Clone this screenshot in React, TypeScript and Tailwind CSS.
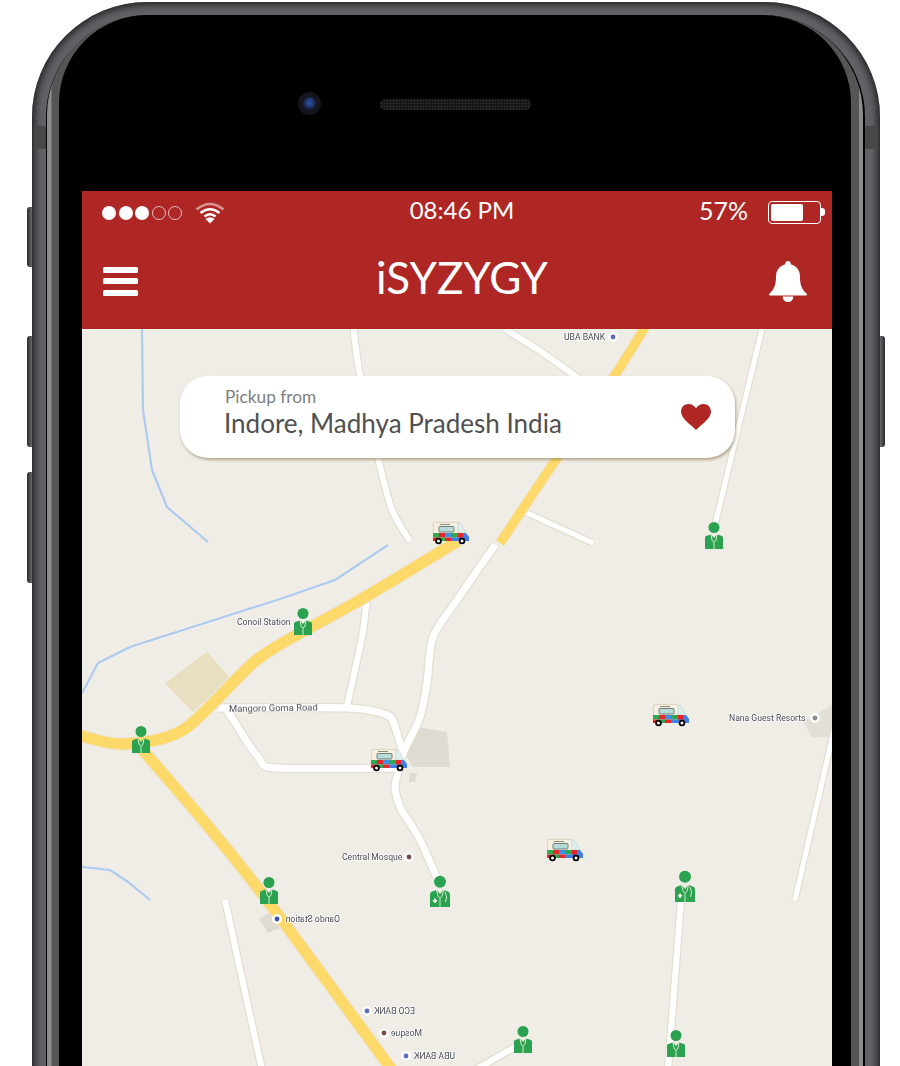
import React from "react";

const lato = "[font-family:Lato,sans-serif]";

function smooth(points: string): string {
  const p = points.split(" ").map((s) => s.split(",").map(Number));
  let d = `M${p[0][0]} ${p[0][1]}`;
  for (let i = 0; i < p.length - 1; i++) {
    const p0 = p[i - 1] ?? p[i];
    const p1 = p[i];
    const p2 = p[i + 1];
    const p3 = p[i + 2] ?? p2;
    const k = 0.14;
    const c1x = p1[0] + (p2[0] - p0[0]) * k;
    const c1y = p1[1] + (p2[1] - p0[1]) * k;
    const c2x = p2[0] - (p3[0] - p1[0]) * k;
    const c2y = p2[1] - (p3[1] - p1[1]) * k;
    d += `C${c1x.toFixed(1)} ${c1y.toFixed(1)} ${c2x.toFixed(1)} ${c2y.toFixed(1)} ${p2[0]} ${p2[1]}`;
  }
  return d;
}

const whiteRoads: { p: string; w?: number }[] = [
  { p: "353,325 360,376 378,458 392,510 410,541", w: 6 },
  { p: "505,329 543,353 578,378", w: 6 },
  { p: "495,545 457,600 433,637 427,683 420,717 403,753 398,773 395,787 400,807 408,820 420,840 438,880" },
  { p: "218,708 347,708 387,715 395,727 403,753" },
  { p: "227,710 258,757 277,768 400,768" },
  { p: "367,596 362,637 347,706", w: 6 },
  { p: "525,512 593,543", w: 5 },
  { p: "762,329 715,525", w: 5 },
  { p: "834,730 795,900", w: 5 },
  { p: "681,900 668,1070", w: 6 },
  { p: "225,900 262,1070", w: 6 },
  { p: "475,1070 520,1044", w: 6 },
];

const yellowRoads: { p: string; w: number }[] = [
  { p: "78,735 123,744 183,730 253,663 293,637 360,600 458,541", w: 11 },
  { p: "141,748 207,825 267,900 392,1070", w: 11 },
  { p: "645,327 615,375 557,458 500,543", w: 9 },
];

const streams = [
  "142,329 143,410 152,470 167,507 208,542",
  "82,693 98,663 130,647 277,600 335,580 388,545",
  "82,867 110,870 128,882 150,900",
];

const labels: { t: string; x: number; y: number; mirror?: boolean; rot?: number; size?: number }[] = [
  { t: "UBA BANK", x: 564, y: 340 },
  { t: "Conoil Station", x: 237, y: 625 },
  { t: "Mangoro Goma Road", x: 229, y: 712, rot: -1, size: 9.4 },
  { t: "Nana Guest Resorts", x: 729, y: 721 },
  { t: "Central Mosque", x: 342, y: 860 },
  { t: "Oando Station", x: 340, y: 922, mirror: true },
  { t: "ECO BANK", x: 415, y: 1014, mirror: true },
  { t: "Mosque", x: 422, y: 1036, mirror: true },
  { t: "UBA BANK", x: 455, y: 1059, mirror: true },
];

const poiDots: { x: number; y: number; c: string }[] = [
  { x: 613, y: 337, c: "#5c6bc0" },
  { x: 409, y: 857, c: "#7a4a4a" },
  { x: 277, y: 919, c: "#3f51b5" },
  { x: 367, y: 1011, c: "#5c6bc0" },
  { x: 384, y: 1033, c: "#7a4a4a" },
  { x: 406, y: 1056, c: "#5c6bc0" },
  { x: 815, y: 718, c: "#8a8a8a" },
];

const doctors: { x: number; y: number; big?: boolean }[] = [
  { x: 705, y: 522 },
  { x: 294, y: 608 },
  { x: 132, y: 726 },
  { x: 260, y: 877 },
  { x: 430, y: 876, big: true },
  { x: 675, y: 871, big: true },
  { x: 514, y: 1026 },
  { x: 667, y: 1030 },
];

const vans = [
  { x: 433, y: 522 },
  { x: 653, y: 704 },
  { x: 371, y: 749 },
  { x: 547, y: 839 },
];

function MapArt() {
  return (
    <svg width="750" height="737" viewBox="82 329 750 737" className="block">
      <defs>
        <g id="doc">
          <circle cx="9" cy="5.5" r="5.5" fill="#2ba24f" />
          <path d="M0 27V15.5Q0 14 2.5 13.4L6 12.4 9 16 12 12.4 15.5 13.4Q18 14 18 15.5V27Z" fill="#2ba24f" />
          <path d="M6 12.5L7 18Q9 22 11 18L12 12.5M9 20.5V27" fill="none" stroke="#e9f3d8" strokeWidth="0.9" />
        </g>
        <g id="docBig">
          <circle cx="10" cy="5.8" r="6" fill="#2ba24f" />
          <path d="M0 31V18.5Q0 16 3 15.2L6.5 14 10 18 13.5 14 17 15.2Q20 16 20 18.5V31Z" fill="#2ba24f" />
          <path d="M6.5 14L8 20Q10 24 12 20L13.5 14M10 22.5V31M15 16Q18 21 15.5 26" fill="none" stroke="#e9f3d8" strokeWidth="0.9" />
          <path d="M5 22.5V27M2.8 24.8H7.2" stroke="#ffffff" strokeWidth="1.6" />
        </g>
        <g id="van">
          <rect x="0.4" y="0.4" width="25" height="11.5" rx="1" fill="#f4efdf" stroke="#d6ceb4" strokeWidth="0.8" />
          <rect x="6" y="4.5" width="15" height="5.5" rx="1" fill="#b6dcd8" stroke="#6a7472" strokeWidth="0.9" />
          <rect x="7" y="2" width="10" height="1" fill="#8b8f80" />
          <path d="M25 1L28 2 33 11H25Z" fill="#dcefec" stroke="#b9cbc8" strokeWidth="0.5" />
          <path d="M25 11H33L36 15V19H25Z" fill="#3f7fe6" />
          <rect x="0" y="11" width="6" height="4.5" fill="#2fa84f" />
          <rect x="6" y="11" width="6" height="4.5" fill="#e8262a" />
          <rect x="12" y="11" width="6" height="4.5" fill="#3f8fe6" />
          <rect x="18" y="11" width="7" height="4.5" fill="#2fa84f" />
          <rect x="25" y="11" width="5" height="4.5" fill="#e8262a" />
          <rect x="0" y="15.5" width="6" height="3.5" fill="#e8262a" />
          <rect x="6" y="15.5" width="6" height="3.5" fill="#2fa84f" />
          <rect x="12" y="15.5" width="6" height="3.5" fill="#e8262a" />
          <rect x="18" y="15.5" width="7" height="3.5" fill="#3f7fe6" />
          <circle cx="5.5" cy="19" r="2.4" fill="#ffffff" stroke="#000000" strokeWidth="1.8" />
          <circle cx="29" cy="19" r="2.4" fill="#ffffff" stroke="#000000" strokeWidth="1.8" />
        </g>
      </defs>

      <polygon points="207,652 230,678 193,712 165,683" fill="#e8dfc0" />
      <polygon points="417,727 447,732 450,767 413,767 407,757" fill="#dedbd3" />
      <polygon points="410,773 417,773 415,782 409,782" fill="#dedbd3" />
      <polygon points="259,918 281,908 288,925 268,933" fill="#dedbd3" />
      <polygon points="803,722 832,705 832,737 812,737" fill="#e2dfd7" />

      {streams.map((s) => (
        <polyline key={s} points={s} fill="none" stroke="#adcbf0" strokeWidth="2.2" />
      ))}

      {whiteRoads.map((r) => (
        <path key={r.p + "c"} d={smooth(r.p)} fill="none" stroke="#e3dfd0" strokeWidth={(r.w ?? 7) + 2.5} />
      ))}
      {whiteRoads.map((r) => (
        <path key={r.p} d={smooth(r.p)} fill="none" stroke="#ffffff" strokeWidth={r.w ?? 7} />
      ))}
      {yellowRoads.map((r) => (
        <path key={r.p + "c"} d={smooth(r.p)} fill="none" stroke="#ebe6d8" strokeWidth={r.w + 2.5} />
      ))}
      {yellowRoads.map((r) => (
        <path key={r.p} d={smooth(r.p)} fill="none" stroke="#fdd969" strokeWidth={r.w} />
      ))}

      {poiDots.map((d) => (
        <g key={`${d.x}-${d.y}`}>
          <circle cx={d.x} cy={d.y} r="5" fill="#ffffff" opacity="0.9" />
          <circle cx={d.x} cy={d.y} r="2.4" fill={d.c} />
        </g>
      ))}

      {labels.map((l) => (
        <text
          key={l.t + l.x}
          className="blur-[0.3px]"
          transform={
            l.mirror
              ? `translate(${l.x} ${l.y}) scale(-1 1)`
              : `translate(${l.x} ${l.y}) rotate(${l.rot ?? 0})`
          }
          fontFamily="Roboto, sans-serif"
          fontSize={l.size ?? 8.6}
          fill="#4a4a55"
          stroke="#ffffff"
          strokeWidth="1.6"
          paintOrder="stroke"
          strokeOpacity="0.8"
        >
          {l.t}
        </text>
      ))}

      {doctors.map((d) => (
        <use key={`${d.x}-${d.y}`} href={d.big ? "#docBig" : "#doc"} x={d.x} y={d.y} />
      ))}
      {vans.map((v) => (
        <use key={`${v.x}-${v.y}`} href="#van" x={v.x} y={v.y} />
      ))}
    </svg>
  );
}

function Wifi() {
  return (
    <svg width="30" height="23" viewBox="0 0 30 23" className="ml-[13px]">
      <path d="M1.5 8.5Q15 -2.5 28.5 8.5" fill="none" stroke="#ffffff" strokeOpacity="0.5" strokeWidth="2.6" />
      <path d="M5.5 12Q15 4.5 24.5 12" fill="none" stroke="#ffffff" strokeWidth="2.6" />
      <path d="M9.5 15.5Q15 11 20.5 15.5" fill="none" stroke="#ffffff" strokeWidth="2.6" />
      <path d="M10.5 18Q15 14.5 19.5 18L15 22.5Z" fill="#ffffff" />
    </svg>
  );
}

function Bell() {
  return (
    <svg width="38" height="41" viewBox="0 0 38 41">
      <path
        d="M19 0a2.6 2.6 0 0 1 2.6 3.3C27.6 4.8 31 9.6 31 15.5c0 8 1.5 12.6 6.6 17.2.8.8.3 1.8-.7 1.8H1.1c-1 0-1.5-1-.7-1.8C5.5 28.1 7 23.5 7 15.5 7 9.6 10.4 4.8 16.4 3.3A2.6 2.6 0 0 1 19 0Z"
        fill="#ffffff"
      />
      <path d="M13.6 35.6h10.8a5.4 5.4 0 0 1-10.8 0Z" fill="#ffffff" />
    </svg>
  );
}

function Heart() {
  return (
    <svg width="30" height="26" viewBox="0 0 30 26">
      <path
        d="M15 26C10 20.5 0 15 0 7.5 0 3 3.4 0 7.5 0 10.7 0 13.5 1.7 15 4.5 16.5 1.7 19.3 0 22.5 0 26.6 0 30 3 30 7.5 30 15 20 20.5 15 26Z"
        fill="#ae2724"
      />
    </svg>
  );
}

function Dot({ on }: { on?: boolean }) {
  return on ? (
    <span className="block w-[14px] h-[14px] rounded-full bg-white" />
  ) : (
    <span className="block w-[14px] h-[14px] rounded-full border border-white/70" />
  );
}

export default function App() {
  return (
    <div className={`relative w-[900px] h-[1066px] overflow-hidden bg-white ${lato}`}>
      {/* side buttons */}
      <div className="absolute left-[27px] top-[207px] w-[6px] h-[60px] rounded-l-[3px] bg-gradient-to-r from-[#2c2c2e] to-[#77777b]" />
      <div className="absolute left-[27px] top-[336px] w-[6px] h-[111px] rounded-l-[3px] bg-gradient-to-r from-[#2c2c2e] to-[#77777b]" />
      <div className="absolute left-[27px] top-[472px] w-[6px] h-[111px] rounded-l-[3px] bg-gradient-to-r from-[#2c2c2e] to-[#77777b]" />
      <div className="absolute left-[879px] top-[336px] w-[6px] h-[111px] rounded-r-[3px] bg-gradient-to-l from-[#2c2c2e] to-[#77777b]" />

      {/* phone body */}
      <div className="relative ml-[32px] mt-[2px] w-[848px] h-[1300px] rounded-[115px] bg-[#626266] shadow-[inset_0_0_7px_3px_#242426] pl-[14px] pr-[15px] pt-[13px]">
        {/* antenna bands */}
        <div className="absolute left-[2px] top-[124px] w-[12px] h-[23px] bg-[#47474a]" />
        <div className="absolute right-[2px] top-[124px] w-[13px] h-[23px] bg-[#47474a]" />
        <div className="h-full rounded-[102px] bg-black pl-px pr-[2px]">
          <div className="h-full rounded-[100px] bg-[linear-gradient(90deg,#8c8c8c_0,#8c8c8c_4px,#555_5px,#555_calc(100%-12px),#555_calc(100%-4px),#8c8c8c_calc(100%-4px),#8c8c8c_100%)] px-[12px]">
            <div className="h-full rounded-[88px] bg-black pl-[23px] pr-[19px] pt-[176px]">
              {/* front camera + speaker */}
              <div className="relative">
                <div className="absolute left-[216px] top-[-99px] w-[23px] h-[23px] rounded-full bg-[#15161d] flex items-center justify-center">
                  <div className="w-[13px] h-[13px] rounded-full bg-[radial-gradient(circle_at_50%_45%,#2f55a8,#131c3c_75%)]" />
                </div>
                <div className="absolute left-[298px] top-[-92px] w-[151px] h-[11px] rounded-full bg-[radial-gradient(#3c3c3c_1px,#181818_1px)] bg-[length:3px_3px]" />
              </div>

              {/* screen */}
              <div className="w-[750px]">
                <div className="h-[138px] bg-[#ae2724] text-white">
                  <div className="h-[42px] pl-[20px] pr-[7px] flex items-center justify-between">
                    <div className="flex items-center pt-[1px]">
                      <div className="flex gap-[2.5px]">
                        <Dot on />
                        <Dot on />
                        <Dot on />
                        <Dot />
                        <Dot />
                      </div>
                      <Wifi />
                    </div>
                    <div className="text-[24px] leading-none pb-[4px]">08:46 PM</div>
                    <div className="flex items-center">
                      <div className="text-[25px] leading-none pb-[4px]">57%</div>
                      <div className="ml-[20px] w-[53px] h-[23px] rounded-[4px] border-[1.5px] border-white p-[2px]">
                        <div className="w-[32px] h-full rounded-[2px] bg-white" />
                      </div>
                      <div className="w-[4px] h-[8px] rounded-r-[3px] bg-white" />
                    </div>
                  </div>
                  <div className="pl-[21px] pr-[25px] pt-[19px] flex items-center justify-between">
                    <div className="flex flex-col gap-[5.5px]">
                      <div className="w-[35px] h-[6px] rounded-[1.5px] bg-white" />
                      <div className="w-[35px] h-[6px] rounded-[1.5px] bg-white" />
                      <div className="w-[35px] h-[6px] rounded-[1.5px] bg-white" />
                    </div>
                    <div className="ml-[17px] mb-[8px] text-[44px] leading-[50px]">iSYZYGY</div>
                    <Bell />
                  </div>
                </div>

                <div className="relative h-[737px] bg-[#f0ede6] overflow-hidden">
                  <MapArt />
                  <div className="absolute left-[98px] top-[47px] w-[555px] h-[82px] rounded-[28px] bg-white shadow-[1px_2px_3px_rgba(130,110,70,0.55)] pl-[44px] pr-[24px] flex items-center justify-between">
                    <div className="pb-[9px]">
                      <div className="text-[17.3px] leading-[20px] text-[#808080] pl-px">Pickup from</div>
                      <div className="text-[26px] leading-[32px] text-[#505050]">Indore, Madhya Pradesh India</div>
                    </div>
                    <Heart />
                  </div>
                </div>
              </div>
            </div>
          </div>
        </div>
      </div>
    </div>
  );
}
